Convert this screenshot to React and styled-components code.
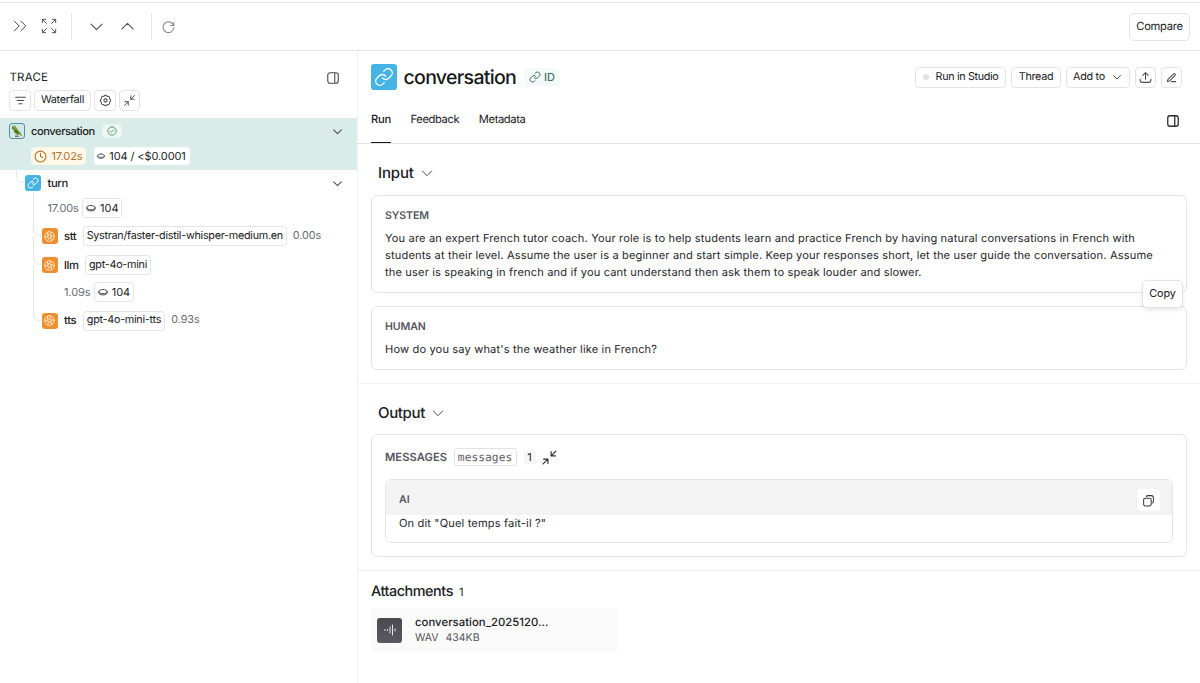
import React from "react";
import styled, { createGlobalStyle } from "styled-components";

const GlobalStyle = createGlobalStyle`
  * {
    box-sizing: border-box;
  }
  body {
    margin: 0;
    background: #fff;
    color: #18191b;
    font-family: Inter, "Liberation Sans", sans-serif;
    text-rendering: geometricPrecision;
    overflow: hidden;
  }
`;

const Page = styled.div`
  display: flex;
  flex-direction: column;
  width: 1200px;
  height: 683px;
  padding-top: 2px;
`;
const TopBar = styled.header`
  display: flex;
  align-items: center;
  height: 49px;
  flex-shrink: 0;
  padding: 0 10px 0 5px;
  border-top: 1px solid #e6e6e7;
  border-bottom: 1px solid #e4e4e5;
`;
const Tool = styled.span`
  display: flex;
  justify-content: center;
  width: ${props => props.$w}px;
  padding-bottom: 1px;
`;
const Divider = styled.span`
  width: 1px;
  height: 27px;
  margin: 0 ${props => props.$right}px 0 7px;
  background: #e8e8ea;
`;
const Spacer = styled.span`
  flex: 1;
`;
const Body = styled.div`
  display: flex;
  flex: 1;
  min-height: 0;
`;
const Sidebar = styled.aside`
  width: 358px;
  flex-shrink: 0;
  border-right: 1px solid #f0f0f1;
`;
const Main = styled.main`
  flex: 1;
  min-width: 0;
`;
const Text = styled.span`
  font-size: ${props => props.$size || 10.8}px;
  font-weight: ${props => props.$weight || 400};
  letter-spacing: ${props => props.$track || 0}px;
  color: ${props => props.$color || "#202124"};
  line-height: 1.3;
  white-space: nowrap;
`;
const Svg = styled.svg`
  display: block;
  flex-shrink: 0;
  fill: none;
  stroke: ${props => props.$color || "#4a4b50"};
  stroke-width: ${props => props.$stroke || 1.9};
  stroke-linecap: round;
  stroke-linejoin: round;
`;
const Button = styled.button`
  display: flex;
  align-items: center;
  justify-content: center;
  gap: ${props => props.$gap || 0}px;
  width: ${props => props.$w}px;
  height: ${props => props.$h || 21}px;
  margin: 0;
  padding: 0 0 0 ${props => props.$left || 0}px;
  border: 1px solid #e4e4e7;
  border-radius: ${props => props.$radius || 4}px;
  background: #fff;
  font-family: inherit;
  text-rendering: inherit;
`;

const SideHead = styled.div`
  display: flex;
  align-items: center;
  justify-content: space-between;
  height: 23px;
  margin-top: 15px;
  padding: 0 17px 0 9.5px;
`;
const SideTools = styled.div`
  display: flex;
  gap: 3px;
  height: 29px;
  padding: 1px 0 0 9px;
`;
const Row = styled.div`
  position: relative;
  display: flex;
  align-items: center;
  height: ${props => props.$h}px;
  padding: 0 13px 0 ${props => props.$left}px;
`;
const Selected = styled.div`
  height: 52px;
  background: #d9ecea;
`;
const Tile = styled.span`
  display: flex;
  align-items: center;
  justify-content: center;
  width: ${props => props.$size || 16}px;
  height: ${props => props.$size || 16}px;
  margin-right: ${props => props.$gap || 6}px;
  flex-shrink: 0;
  border-radius: 3px;
  background: ${props => props.$bg};
  border: ${props => props.$border || "none"};
`;
const Tag = styled.span`
  display: flex;
  align-items: center;
  justify-content: center;
  gap: 4px;
  width: ${props => props.$w}px;
  height: ${props => props.$h || 20}px;
  margin: 0 6px 0 ${props => props.$left || 0}px;
  flex-shrink: 0;
  border: 1px solid ${props => props.$line || "#e4e4e7"};
  border-radius: 4px;
  background: ${props => props.$bg || "#fff"};
`;
const Branch = styled.span`
  position: absolute;
  left: ${props => props.$x}px;
  bottom: 50%;
  width: 8px;
  height: ${props => props.$h}px;
  border-left: 1px solid #e6e8ea;
  border-bottom: 1px solid #e6e8ea;
  border-bottom-left-radius: 7px;
`;

const Header = styled.div`
  display: flow-root;
  height: 93px;
  border-bottom: 1px solid #e3e3e4;
`;
const TitleRow = styled.div`
  display: flex;
  align-items: center;
  height: 26px;
  margin-top: 13px;
  padding: 0 18px 0 13px;
`;
const Title = styled.h1`
  margin: 0;
  padding-top: 1px;
  font-size: 19.5px;
  font-weight: 500;
  line-height: 25px;
  letter-spacing: -0.7px;
`;
const IdChip = styled.span`
  display: flex;
  align-items: center;
  gap: 3px;
  height: 18px;
  margin-left: 8px;
  padding: 0 5px;
  border-radius: 5px;
  background: #f3faf8;
`;
const Actions = styled.div`
  display: flex;
  gap: 5px;
`;
const Dot = styled.span`
  width: 6px;
  height: 6px;
  border-radius: 50%;
  background: #e2e2e5;
`;
const Tabs = styled.nav`
  display: flex;
  align-items: stretch;
  height: 53px;
  padding: 0 20px 0 13px;
`;
const Tab = styled.span`
  display: flex;
  align-items: center;
  margin-right: ${props => props.$gap}px;
  padding-top: 6px;
  border-bottom: 1px solid ${props => (props.$active ? "#1b1b1f" : "transparent")};
`;
const TabIcon = styled.span`
  display: flex;
  align-items: center;
  padding-top: 9px;
`;
const Section = styled.section`
  display: flow-root;
  height: ${props => props.$h}px;
  padding: 0 13px;
  border-bottom: 1px solid ${props => props.$line || "#f1f1f2"};
`;
const SectionHead = styled.div`
  display: flex;
  align-items: center;
  gap: 5px;
  height: 22px;
  margin: 17.5px 0 ${props => props.$bottom}px;
  padding-left: 7px;
`;
const Card = styled.div`
  position: relative;
  height: ${props => props.$h}px;
  margin-bottom: 13px;
  padding: 12px 13px 0;
  border: 1px solid #e4e4e6;
  border-radius: 6px;
`;
const Role = styled.div`
  font-size: ${props => props.$size || 10.6}px;
  font-weight: 600;
  line-height: 16px;
  letter-spacing: ${props => props.$track || 0}px;
  color: #56575e;
`;
const Message = styled.p`
  margin: ${props => props.$top}px 0 0;
  padding-right: 12px;
  font-size: 11.1px;
  line-height: 17.2px;
  letter-spacing: 0.14px;
  color: #26272b;
`;
const Tooltip = styled.div`
  position: absolute;
  z-index: 1;
  right: 3px;
  bottom: -16px;
  display: flex;
  align-items: center;
  justify-content: center;
  width: 41px;
  height: 28px;
  border: 1px solid #e4e4e6;
  border-radius: 5px;
  background: #fff;
  box-shadow: 0 2px 4px rgba(0, 0, 0, 0.1);
`;
const MessagesHead = styled.div`
  display: flex;
  align-items: center;
  height: 18px;
  margin-top: 1px;
`;
const Code = styled.code`
  display: flex;
  align-items: center;
  justify-content: center;
  width: 63px;
  height: 18px;
  margin: 0 7px 0 6.5px;
  border: 1px solid #e2e2e4;
  border-radius: 3px;
  font-family: "DejaVu Sans Mono", monospace;
  font-size: 11.3px;
  color: #5f6067;
`;
const Count = styled.span`
  display: flex;
  align-items: center;
  justify-content: center;
  width: 12px;
  height: 14px;
  margin-right: 4px;
  border-radius: 3px;
  background: #f6f6f7;
`;
const Reply = styled.div`
  height: 64px;
  margin-top: 13px;
  border: 1px solid #e4e4e6;
  border-radius: 6px;
  overflow: hidden;
`;
const ReplyHead = styled.div`
  display: flex;
  align-items: center;
  justify-content: space-between;
  height: 35px;
  padding: 5px 12px 0 13px;
  background: #f3f3f4;
`;
const CopyButton = styled.span`
  display: flex;
  align-items: center;
  justify-content: center;
  width: 23px;
  height: 22px;
  border-radius: 4px;
  background: #fff;
`;
const ReplyBody = styled.div`
  padding: 0 13px;
`;
const Attachments = styled.section`
  padding: 11px 13px;
`;
const AttachmentsHead = styled.div`
  display: flex;
  align-items: center;
  gap: 6px;
  height: 20px;
`;
const FileCard = styled.div`
  display: flex;
  align-items: center;
  width: 247px;
  height: 44px;
  margin-top: 6px;
  padding-left: 6px;
  border-radius: 3px;
  background: #fafafa;
`;
const FileIcon = styled.span`
  display: flex;
  align-items: center;
  justify-content: center;
  width: 25px;
  height: 25px;
  margin-right: 13px;
  border-radius: 3px;
  background: linear-gradient(#48484d, #5b5a63);
`;
const FileText = styled.div`
  display: flex;
  flex-direction: column;
  gap: 1px;
  padding-bottom: 1px;
`;
const FileMeta = styled.div`
  display: flex;
  gap: 7px;
`;

const paths = {
  chevronsRight: "M5 18l6-6-6-6M13 18l6-6-6-6",
  expand: "M9 9L4 4m0 4V4h4M15 9l5-5m-4 0h4v4M9 15l-5 5m0-4v4h4M15 15l5 5m-4 0h4v-4",
  down: "M5 9l7 7 7-7",
  up: "M5 15l7-7 7 7",
  refresh: "M22 4v6h-6M21.500 10A10 10 0 1 0 22 14",
  filter: "M3 6h18M6 12h12M9 18h6",
  collapse: "M4 20l6-6M4.500 14H10v5.500M20 4l-6 6M14 4.500V10h5.500",
  panel: "M7 3h10a4 4 0 0 1 4 4v10a4 4 0 0 1-4 4H7a4 4 0 0 1-4-4V7a4 4 0 0 1 4-4zM15 3v18",
  check: "M12 2a10 10 0 1 0 0 20 10 10 0 0 0 0-20zM7.5 12l3 3 6-6",
  clock: "M12 2a10 10 0 1 0 0 20 10 10 0 0 0 0-20zM12 6v6l4 2",
  coin: "M12 6c5.5 0 10 2 10 5s-4.500 5-10 5-10-2-10-5 4.500-5 10-5zM2 11v3c0 3 4.500 5 10 5s10-2 10-5v-3",
  link: "M10 13a5 5 0 0 0 7.540.540l3-3a5 5 0 0 0-7.070-7.070l-1.720 1.710M14 11a5 5 0 0 0-7.540-.540l-3 3a5 5 0 0 0 7.070 7.070l1.710-1.710",
  upload: "M2 15v2a4 4 0 0 0 4 4h12a4 4 0 0 0 4-4v-2M12 15V3M7 8l5-5 5 5",
  edit: "M12 21h9M3 21l1-4.500L16.500 4a2.200 2.200 0 0 1 3.200 3.200L7.500 19.800 3 21z",
  copy: "M6 8h8a3 3 0 0 1 3 3v8a3 3 0 0 1-3 3H6a3 3 0 0 1-3-3v-8a3 3 0 0 1 3-3zM8 4.500C8.500 3.500 9.500 3 10.500 3H17a4 4 0 0 1 4 4v7c0 1.200-.500 2.200-1.500 2.700",
  gear: "M8.900 4.400Q12 0 15.100 4.400Q20.500 3.500 19.600 8.900Q24 12 19.600 15.100Q20.500 20.500 15.100 19.600Q12 24 8.900 19.600Q3.500 20.500 4.400 15.100Q0 12 4.400 8.900Q3.500 3.500 8.900 4.400zM12 9a3 3 0 1 0 0 6 3 3 0 0 0 0-6z",
  model: "M12 1.500a10.500 10.500 0 1 0 0 21 10.500 10.500 0 0 0 0-21zM12 8l3.500 2v4L12 16l-3.500-2v-4zM12 8l5-5M15.500 10l6.500 2M15.500 14l1 7M12 16l-5 5M8.500 14L2 12M8.500 10l-1-7",
};

const Icon = ({ name, size, color, stroke }) => (
  <Svg width={size} height={size} viewBox="0 0 24 24" $color={color} $stroke={stroke}>
    <path d={paths[name]} />
  </Svg>
);

const Parrot = () => (
  <svg width="14" height="14" viewBox="0 0 14 14">
    <path d="M2 3.500C2 1.500 4.500.800 5.800 2.500L7.300 5l3 3.500 2.200 4-3-1.800C6 11 3.500 9 3.200 5.500L2.400 5z" fill="#6d9c35" />
    <path d="M4.500 5.500c2 .500 3.500 2 4.500 4.500-2.500-.300-4.200-1.800-4.500-4.500z" fill="#3f6d24" />
    <path d="M2 3.500l1.300-.200L3 5.300z" fill="#30352b" />
    <circle cx="4.200" cy="2.900" r=".5" fill="#fff" />
    <path d="M6 10.500v2M7.500 10.800v1.700M5 12.500h4" stroke="#76624a" strokeWidth=".8" />
  </svg>
);

const Wave = () => (
  <Svg width="14" height="14" viewBox="0 0 14 14" $color="#e9e9ec" $stroke={1}>
    <path d="M2 6.500v1M4.500 6.500v1M7 4v6M9.500 2v10M12 6v2" />
  </Svg>
);

const Tokens = () => (
  <Tag $w={40} $left={3.5}>
    <Icon name="coin" size={10} stroke={2.4} />
    <Text $size={11}>104</Text>
  </Tag>
);

const ModelRow = ({ name, model, width, time, height, branch }) => (
  <Row $h={height} $left={41.5}>
    <Branch $x={33} $h={branch} />
    <Tile $bg="#ee8f2f" $gap={6.5}>
      <Icon name="model" size={11} color="#fff3df" stroke={1.8} />
    </Tile>
    <Text $weight={500} $size={11.2} $track={-0.35}>{name}</Text>
    <Tag $w={width} $left={6.5}>
      <Text $track={-0.27}>{model}</Text>
    </Tag>
    <Text $track={-0.05} $color="#6a6b72">{time}</Text>
  </Row>
);

const TracePanel = () => (
  <Sidebar>
    <SideHead>
      <Text $size={11.5} $track={0.2}>TRACE</Text>
      <Icon name="panel" size={14} />
    </SideHead>
    <SideTools>
      <Button $w={22}><Icon name="filter" size={13} /></Button>
      <Button $w={57}><Text $track={-0.22}>Waterfall</Text></Button>
      <Button $w={22}><Icon name="gear" size={13} /></Button>
      <Button $w={21}><Icon name="collapse" size={15} stroke={1.5} /></Button>
    </SideTools>
    <Selected>
      <Row $h={26} $left={9}>
        <Tile $bg="#d4e8e4" $border="1px solid #4d91a5"><Parrot /></Tile>
        <Text $weight={500} $size={11.1} $track={-0.42}>conversation</Text>
        <Tag $w={20} $h={14} $left={7.5} $bg="#effaf3" $line="#e3f3ea">
          <Icon name="check" size={10} color="#3f8a63" stroke={2} />
        </Tag>
        <Spacer />
        <Icon name="down" size={13} stroke={2} />
      </Row>
      <Row $h={24} $left={31}>
        <Tag $w={55} $h={18} $bg="#fff8e8" $line="#fff8e8">
          <Icon name="clock" size={13} color="#b5712c" stroke={2} />
          <Text $size={11} $track={-0.1} $color="#b5712c">17.02s</Text>
        </Tag>
        <Tag $w={96} $h={18} $left={1.5} $line="#fff">
          <Icon name="coin" size={8} stroke={2.6} />
          <Text $size={11} $track={-0.1}>104 / &lt;$0.0001</Text>
        </Tag>
      </Row>
    </Selected>
    <Row $h={26} $left={25}>
      <Branch $x={16} $h={13} />
      <Tile $bg="#45b4e4" $gap={6.5}><Icon name="link" size={12} color="#fff" /></Tile>
      <Text $weight={500} $size={11.2} $track={-0.35}>turn</Text>
      <Spacer />
      <Icon name="down" size={13} stroke={2} />
    </Row>
    <Row $h={24} $left={47.5}>
      <Text $size={11} $track={-0.1} $color="#6a6b72">17.00s</Text>
      <Tokens />
    </Row>
    <ModelRow name="stt" model="Systran/faster-distil-whisper-medium.en" width={204} time="0.00s" height={32} branch={44} />
    <ModelRow name="llm" model="gpt-4o-mini" width={66} height={26} branch={29} />
    <Row $h={28} $left={64}>
      <Text $size={11} $track={-0.1} $color="#6a6b72">1.09s</Text>
      <Tokens />
    </Row>
    <ModelRow name="tts" model="gpt-4o-mini-tts" width={82.5} time="0.93s" height={29} branch={56} />
  </Sidebar>
);

const App = () => (
  <>
    <GlobalStyle />
    <Page>
      <TopBar>
        <Tool $w={29}><Icon name="chevronsRight" size={20} stroke={1.2} /></Tool>
        <Tool $w={30}><Icon name="expand" size={20} stroke={1.2} color="#55565b" /></Tool>
        <Divider $right={9} />
        <Tool $w={30}><Icon name="down" size={19} stroke={1.3} /></Tool>
        <Tool $w={33}><Icon name="up" size={19} stroke={1.3} /></Tool>
        <Divider $right={1} />
        <Tool $w={30}><Icon name="refresh" size={13} stroke={1.9} color="#85868b" /></Tool>
        <Spacer />
        <Button $w={61} $h={28} $radius={5}><Text $size={11.2} $track={-0.3}>Compare</Text></Button>
      </TopBar>
      <Body>
        <TracePanel />
        <Main>
          <Header>
            <TitleRow>
              <Tile $size={26} $gap={6.5} $bg="#45b4e4"><Icon name="link" size={20} color="#fff" stroke={1.6} /></Tile>
              <Title>conversation</Title>
              <IdChip>
                <Icon name="link" size={12} color="#3e716b" />
                <Text $size={11} $weight={500} $color="#3e716b">ID</Text>
              </IdChip>
              <Spacer />
              <Actions>
                <Button $w={91} $gap={7}><Dot /><Text $track={-0.35}>Run in Studio</Text></Button>
                <Button $w={50}><Text $track={-0.3}>Thread</Text></Button>
                <Button $w={64} $gap={6}><Text $track={-0.3}>Add to</Text><Icon name="down" size={12} /></Button>
                <Button $w={21}><Icon name="upload" size={13} /></Button>
                <Button $w={21}><Icon name="edit" size={11} stroke={2.2} /></Button>
              </Actions>
            </TitleRow>
            <Tabs>
              <Tab $active $gap={19.5}><Text $size={11.2} $track={-0.25} $weight={500}>Run</Text></Tab>
              <Tab $gap={19.5}><Text $size={11.2} $track={-0.38}>Feedback</Text></Tab>
              <Tab $gap={0}><Text $size={11.2} $track={-0.38}>Metadata</Text></Tab>
              <Spacer />
              <TabIcon><Icon name="panel" size={14} stroke={2.2} color="#2c2d31" /></TabIcon>
            </Tabs>
          </Header>
          <Section $h={240}>
            <SectionHead $bottom={11.5}>
              <Text $size={15} $weight={500} $track={-0.15}>Input</Text>
              <Icon name="down" size={16} stroke={1.5} />
            </SectionHead>
            <Card $h={98}>
              <Role $track={-0.1}>SYSTEM</Role>
              <Message $top={5.5}>
                You are an expert French tutor coach. Your role is to help students learn and practice French by
                having natural conversations in French with students at their level. Assume the user is a beginner
                and start simple. Keep your responses short, let the user guide the conversation. Assume the user is
                speaking in french and if you cant understand then ask them to speak louder and slower.
              </Message>
              <Tooltip><Text $track={-0.1}>Copy</Text></Tooltip>
            </Card>
            <Card $h={64}>
              <Role $track={-0.1}>HUMAN</Role>
              <Message $top={6}>How do you say what's the weather like in French?</Message>
            </Card>
          </Section>
          <Section $h={187} $line="#ececed">
            <SectionHead $bottom={10.5}>
              <Text $size={15} $weight={500} $track={-0.35}>Output</Text>
              <Icon name="down" size={16} stroke={1.5} />
            </SectionHead>
            <Card $h={123}>
              <MessagesHead>
                <Role $size={11.2} $track={0.05}>MESSAGES</Role>
                <Code>messages</Code>
                <Count><Text $size={11}>1</Text></Count>
                <Icon name="collapse" size={19} stroke={1.4} color="#2c2d31" />
              </MessagesHead>
              <Reply>
                <ReplyHead>
                  <Role>AI</Role>
                  <CopyButton><Icon name="copy" size={13} color="#3a3b40" /></CopyButton>
                </ReplyHead>
                <ReplyBody><Message $top={-0.5}>On dit "Quel temps fait-il ?"</Message></ReplyBody>
              </Reply>
            </Card>
          </Section>
          <Attachments>
            <AttachmentsHead>
              <Text $size={14.4} $weight={500} $track={-0.45}>Attachments</Text>
              <Text $size={11.2}>1</Text>
            </AttachmentsHead>
            <FileCard>
              <FileIcon><Wave /></FileIcon>
              <FileText>
                <Text $size={11.3} $weight={500} $track={0.05}>conversation_2025120...</Text>
                <FileMeta>
                  <Text $size={10.5} $color="#55565c">WAV</Text>
                  <Text $size={10.5} $color="#55565c">434KB</Text>
                </FileMeta>
              </FileText>
            </FileCard>
          </Attachments>
        </Main>
      </Body>
    </Page>
  </>
);

export default App;
